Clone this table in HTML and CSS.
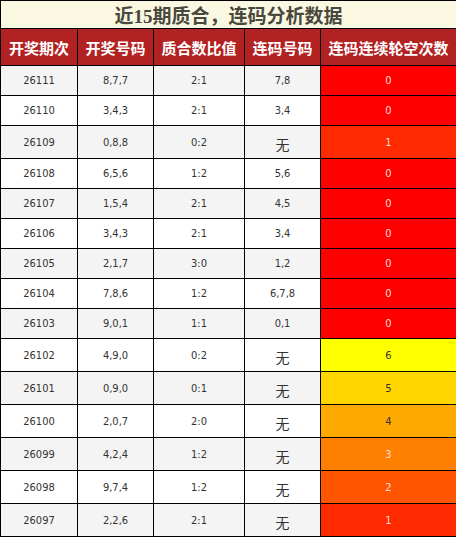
FILE: index.html
```html
<!DOCTYPE html>
<html lang="zh-CN">
<head>
    <meta charset="UTF-8">
    <meta name="viewport" content="width=device-width, initial-scale=1.0">
    <title>近15期质合，连码分析数据</title>
    <link rel="stylesheet" href="styles.css">
</head>
<body>
    <table class="data">
        <colgroup>
            <col class="c1">
            <col class="c2">
            <col class="c3">
            <col class="c4">
            <col class="c5">
        </colgroup>
        <tr class="title-row">
            <td colspan="5" class="title">近15期质合，连码分析数据</td>
        </tr>
        <tr class="head-row">
            <th>开奖期次</th>
            <th>开奖号码</th>
            <th>质合数比值</th>
            <th>连码号码</th>
            <th>连码连续轮空次数</th>
        </tr>
        <tr class="odd"><td>26111</td><td>8,7,7</td><td>2:1</td><td>7,8</td><td class="miss m0">0</td></tr>
        <tr><td>26110</td><td>3,4,3</td><td>2:1</td><td>3,4</td><td class="miss m0">0</td></tr>
        <tr class="odd tall"><td>26109</td><td>0,8,8</td><td>0:2</td><td class="none">无</td><td class="miss m1">1</td></tr>
        <tr><td>26108</td><td>6,5,6</td><td>1:2</td><td>5,6</td><td class="miss m0">0</td></tr>
        <tr class="odd"><td>26107</td><td>1,5,4</td><td>2:1</td><td>4,5</td><td class="miss m0">0</td></tr>
        <tr><td>26106</td><td>3,4,3</td><td>2:1</td><td>3,4</td><td class="miss m0">0</td></tr>
        <tr class="odd"><td>26105</td><td>2,1,7</td><td>3:0</td><td>1,2</td><td class="miss m0">0</td></tr>
        <tr><td>26104</td><td>7,8,6</td><td>1:2</td><td>6,7,8</td><td class="miss m0">0</td></tr>
        <tr class="odd"><td>26103</td><td>9,0,1</td><td>1:1</td><td>0,1</td><td class="miss m0">0</td></tr>
        <tr class="tall"><td>26102</td><td>4,9,0</td><td>0:2</td><td class="none">无</td><td class="miss m6">6</td></tr>
        <tr class="odd tall"><td>26101</td><td>0,9,0</td><td>0:1</td><td class="none">无</td><td class="miss m5">5</td></tr>
        <tr class="tall"><td>26100</td><td>2,0,7</td><td>2:0</td><td class="none">无</td><td class="miss m4">4</td></tr>
        <tr class="odd tall"><td>26099</td><td>4,2,4</td><td>1:2</td><td class="none">无</td><td class="miss m3">3</td></tr>
        <tr class="tall"><td>26098</td><td>9,7,4</td><td>1:2</td><td class="none">无</td><td class="miss m2">2</td></tr>
        <tr class="odd tall"><td>26097</td><td>2,2,6</td><td>2:1</td><td class="none">无</td><td class="miss m1">1</td></tr>
    </table>
</body>
</html>
```

FILE: styles.css
```css
body {
    margin: 0;
    background: #ffffff;
}

.data {
    width          : 456px;
    border-collapse: collapse;
    table-layout   : fixed;
    font-family    : "DejaVu Sans Condensed", "DejaVu Sans", "Noto Sans CJK SC", sans-serif;
    font-size      : 11px;
    color          : #333333;
}

.c1 { width: 77px; }
.c2 { width: 76px; }
.c3 { width: 91px; }
.c4 { width: 76px; }
.c5 { width: 136px; }

.data td,
.data th {
    border    : 1px solid #000000;
    text-align: center;
    padding   : 0;
}

.data tr {
    height: 30px;
}

.data tr.tall {
    height: 33px;
}

.data tr.title-row {
    height: 28px;
}

.title {
    background : #faf8e0;
    color      : #48483e;
    font-family: "Liberation Serif", "Noto Sans CJK SC", serif;
    font-size  : 19px;
    font-weight: bold;
}

.data tr.head-row {
    height: 37px;
}

.head-row th {
    background : #b22222;
    color      : #ffffff;
    font-family: "Noto Sans CJK SC", sans-serif;
    font-size  : 15px;
    font-weight: bold;
}

.odd td {
    background: #f4f4f4;
}

.data td.none {
    font-family: "Noto Sans CJK SC", sans-serif;
    font-size  : 14px;
    padding-top: 3px;
}

.data td.miss { color: #ffdcdc; }
.data td.m0 { background: #ff0000; }
.data td.m1 { background: #ff2a00; }
.data td.m2 { background: #ff5500; }
.data td.m3 { background: #ff8000; }
.data td.m4 { background: #ffaa00; color: #333333; }
.data td.m5 { background: #ffd500; color: #333333; }
.data td.m6 { background: #ffff00; color: #333333; }
```
